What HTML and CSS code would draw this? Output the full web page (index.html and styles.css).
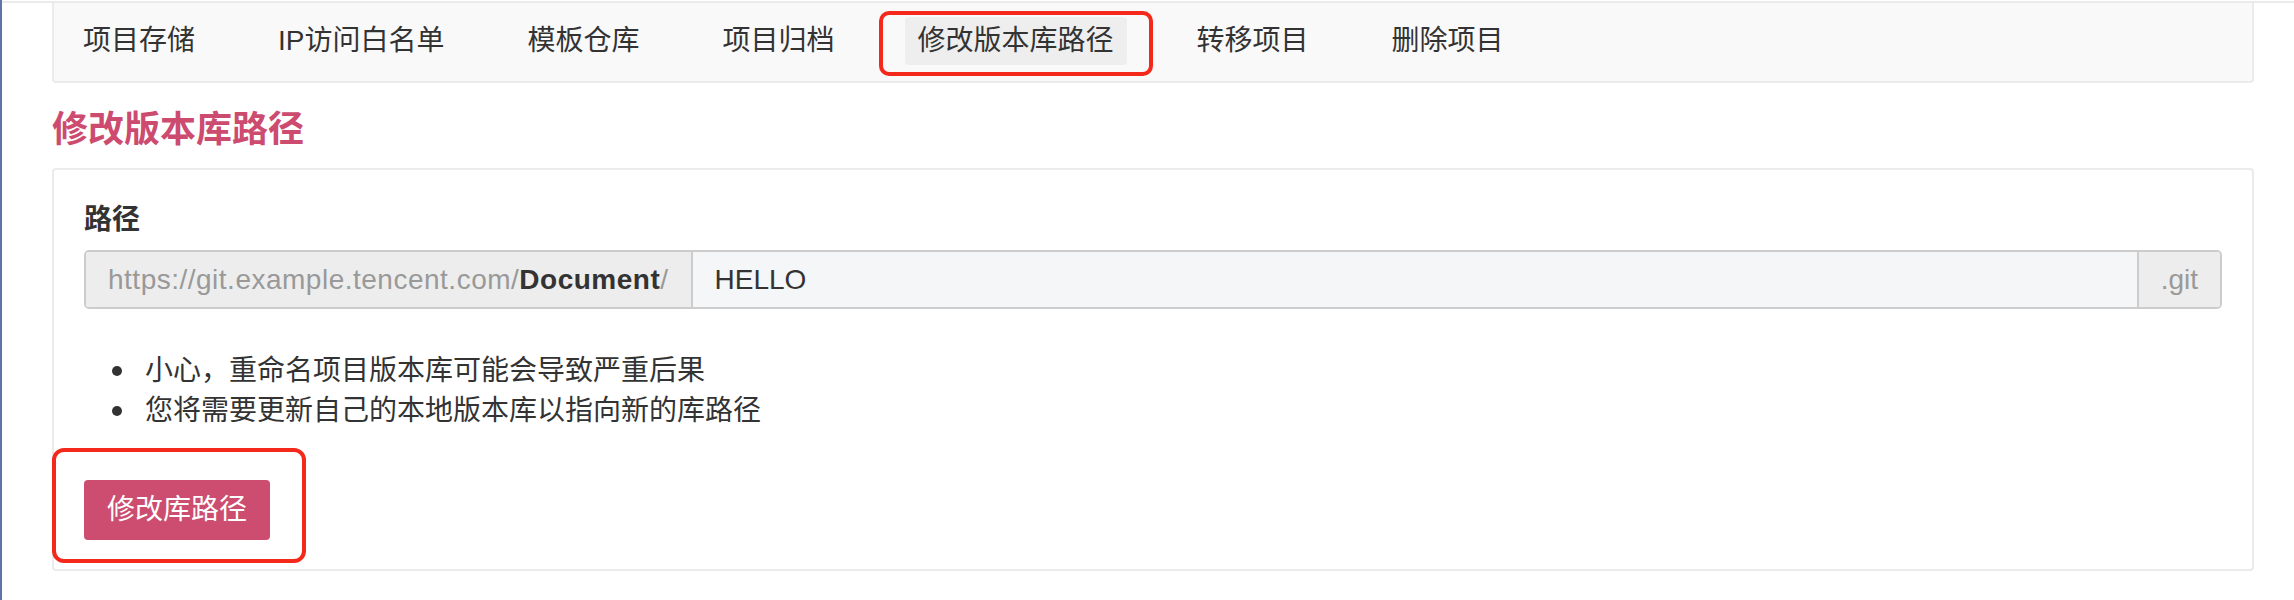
FILE: index.html
```html
<!DOCTYPE html>
<html lang="zh-CN">
<head>
<meta charset="utf-8">
<title>修改版本库路径</title>
<link rel="stylesheet" href="styles.css">
</head>
<body>
<div class="page">
  <div class="edge"></div>
  <div class="main">
    <div class="topline"></div>
    <div class="content">
      <nav class="tabs">
        <a class="tab">项目存储</a>
        <a class="tab">IP访问白名单</a>
        <a class="tab">模板仓库</a>
        <a class="tab">项目归档</a>
        <a class="tab active">修改版本库路径<span class="mark mark-tab"></span></a>
        <a class="tab">转移项目</a>
        <a class="tab">删除项目</a>
      </nav>
      <h2 class="title">修改版本库路径</h2>
      <section class="panel">
        <label class="label">路径</label>
        <div class="input-group">
          <span class="addon prefix">https://git.example.tencent.com/<b>Document</b>/</span>
          <span class="field">HELLO</span>
          <span class="addon suffix">.git</span>
        </div>
        <ul class="notes">
          <li>小心，重命名项目版本库可能会导致严重后果</li>
          <li>您将需要更新自己的本地版本库以指向新的库路径</li>
        </ul>
        <div class="actions">
          <span class="btn-wrap">
            <button class="btn">修改库路径</button>
            <span class="mark mark-btn"></span>
          </span>
        </div>
      </section>
    </div>
  </div>
</div>
</body>
</html>
```

FILE: styles.css
```css
* { box-sizing: border-box; }
html, body { margin: 0; padding: 0; background: #fff; }
body {
  font-family: "Liberation Sans", "Noto Sans CJK SC", sans-serif;
  color: #333;
  font-size: 28px;
  line-height: 40px;
}
.page { display: flex; min-height: 600px; }
.edge { width: 2px; background: #5f74a6; flex: none; }
.main { flex: 1; padding-top: 1px; }
.topline { height: 2px; background: #ebebeb; }
.content { padding: 0 40px 0 50px; }

.tabs {
  display: flex;
  align-items: center;
  gap: 57px;
  height: 80px;
  padding: 0 16px 2px;
  background: #f9f9f9;
  border: 2px solid #ebebeb;
  border-top: none;
  border-radius: 0 0 4px 4px;
}
.tab {
  position: relative;
  display: block;
  padding: 4px 13px;
  color: #333;
  border-radius: 4px;
  font-size: 28px;
  line-height: 40px;
  white-space: nowrap;
}
.tab.active { background: #eeeeee; }

.mark {
  position: absolute;
  border: 4px solid #f5281c;
  border-radius: 12px;
  pointer-events: none;
}
.mark-tab { left: -26px; right: -26px; top: -6px; bottom: -11px; border-radius: 10px; }

.title {
  margin: 27px 0 18px;
  font-size: 36px;
  line-height: 40px;
  font-weight: bold;
  color: #cc4b6f;
}

.panel {
  border: 2px solid #ebebeb;
  border-radius: 4px;
  padding: 30px 30px 29px;
}
.label {
  display: block;
  font-weight: bold;
  margin-bottom: 10px;
}
.input-group {
  display: flex;
  height: 59px;
  border: 2px solid #cccccc;
  border-radius: 5px;
  overflow: hidden;
}
.addon {
  display: flex;
  align-items: center;
  background: #ededed;
  color: #999;
  padding: 0 22px;
  white-space: nowrap;
  flex: none;
}
.prefix { border-right: 2px solid #cccccc; letter-spacing: 0.5px; }
.prefix b { color: #333; }
.suffix { border-left: 2px solid #cccccc; }
.field {
  flex: 1;
  display: flex;
  align-items: center;
  background: #f5f6f8;
  padding: 0 22px;
  color: #333;
}

.notes {
  list-style: none;
  margin: 42px 0 0;
  padding-left: 28px;
}
.notes li {
  display: flex;
  align-items: center;
}
.notes li::before {
  content: "";
  flex: none;
  width: 10px;
  height: 10px;
  border-radius: 50%;
  background: #333;
  margin-right: 23px;
}
.actions { margin-top: 49px; }
.btn-wrap { position: relative; display: inline-block; vertical-align: top; }
.btn {
  display: block;
  font: inherit;
  font-family: "Liberation Sans", "Noto Sans CJK SC", sans-serif;
  font-size: 28px;
  line-height: 40px;
  height: 60px;
  padding: 10px 23px;
  border: none;
  border-radius: 4px;
  background: #cc4d6f;
  color: #fff;
}
.mark-btn { left: -32px; right: -36px; top: -32px; bottom: -23px; }
```
